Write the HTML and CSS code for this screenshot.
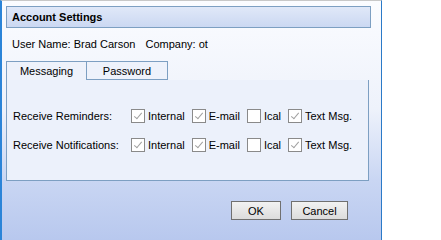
FILE: index.html
```html
<!DOCTYPE html>
<html lang="en">
<head>
  <meta charset="UTF-8">
  <title>Account Settings</title>
  <link rel="stylesheet" href="styles.css">
</head>
<body>
  <div class="dialog">
    <div class="dialog-title">Account Settings</div>

    <div class="user-info">
      <span>User Name: Brad Carson</span>
      <span>Company: ot</span>
    </div>

    <!-- Tabs -->
    <div class="tabs">
      <div class="tab active">Messaging</div>
      <div class="tab">Password</div>
    </div>

    <div class="tab-panel">
      <div class="pref-row">
        <span class="pref-label">Receive Reminders:</span>
        <label class="check"><span class="box checked"></span>Internal</label>
        <label class="check"><span class="box checked"></span>E-mail</label>
        <label class="check"><span class="box"></span>Ical</label>
        <label class="check"><span class="box checked"></span>Text Msg.</label>
      </div>
      <div class="pref-row">
        <span class="pref-label">Receive Notifications:</span>
        <label class="check"><span class="box checked"></span>Internal</label>
        <label class="check"><span class="box checked"></span>E-mail</label>
        <label class="check"><span class="box"></span>Ical</label>
        <label class="check"><span class="box checked"></span>Text Msg.</label>
      </div>
    </div>

    <div class="actions">
      <button class="btn btn-ok">OK</button>
      <button class="btn btn-cancel">Cancel</button>
    </div>
  </div>
</body>
</html>
```

FILE: styles.css
```css
body {
  margin: 0;
  padding: 0;
  background-color: #fff;
  font-family: "Liberation Sans", Arial, sans-serif;
  font-size: 11px;
  color: #000;
}

.dialog {
  box-sizing: border-box;
  width: 382px;
  height: 240px;
  padding: 5px 0 0 4px;
  border-top: 1px solid #c8c8c8;
  border-left: 2px solid #2b84d8;
  border-right: 1px solid #2b7ac8;
  background: linear-gradient(to bottom, #fbfcff 0%, #eef2fb 45%, #c9d6f3 75%, #b8c8ee 100%);
}

.dialog-title {
  box-sizing: border-box;
  width: 365px;
  height: 22px;
  padding-left: 5px;
  display: flex;
  align-items: center;
  font-weight: bold;
  border: 1px solid #7d9fc2;
  background: linear-gradient(to bottom, #e0e8f8, #cbd8f2);
}

.user-info {
  display: flex;
  gap: 10px;
  padding: 10px 0 0 6px;
  height: 23px;
  box-sizing: border-box;
}

.tabs {
  display: flex;
  margin-top: 10px;
}

.tab {
  box-sizing: border-box;
  width: 81px;
  height: 19px;
  display: flex;
  align-items: center;
  justify-content: center;
  border: 1px solid #7d9fc2;
  border-left: none;
  background-color: #eef2fb;
}

.tab:first-child {
  border-left: 1px solid #7d9fc2;
  border-bottom: none;
}

.tab-panel {
  box-sizing: border-box;
  width: 363px;
  height: 101px;
  padding: 29px 0 0 6px;
  border: 1px solid #7d9fc2;
  border-top: none;
  background-color: #ecf1fb;
  display: flex;
  flex-direction: column;
  gap: 16px;
}

.pref-row {
  display: flex;
  align-items: center;
  height: 13px;
}

.pref-label {
  width: 118px;
}

.check {
  display: flex;
  align-items: center;
  gap: 3px;
  margin-right: 7px;
}

.box {
  box-sizing: border-box;
  width: 14px;
  height: 14px;
  border: 1px solid #8a8a8a;
  background-color: #fff;
  position: relative;
}

.box.checked::after {
  content: "";
  position: absolute;
  left: 4px;
  top: 1px;
  width: 3px;
  height: 7px;
  border-right: 1px solid #a0a0a0;
  border-bottom: 1px solid #a0a0a0;
  transform: rotate(40deg);
}

.actions {
  display: flex;
  gap: 10px;
  padding: 20px 0 0 225px;
}

.btn {
  box-sizing: border-box;
  height: 19px;
  padding: 0;
  font-family: "Liberation Sans", Arial, sans-serif;
  font-size: 11px;
  color: #000;
  border: 1px solid #707070;
  background: linear-gradient(to bottom, #f2f2f2, #dcdcdc);
}

.btn-ok {
  width: 50px;
}

.btn-cancel {
  width: 57px;
}
```
